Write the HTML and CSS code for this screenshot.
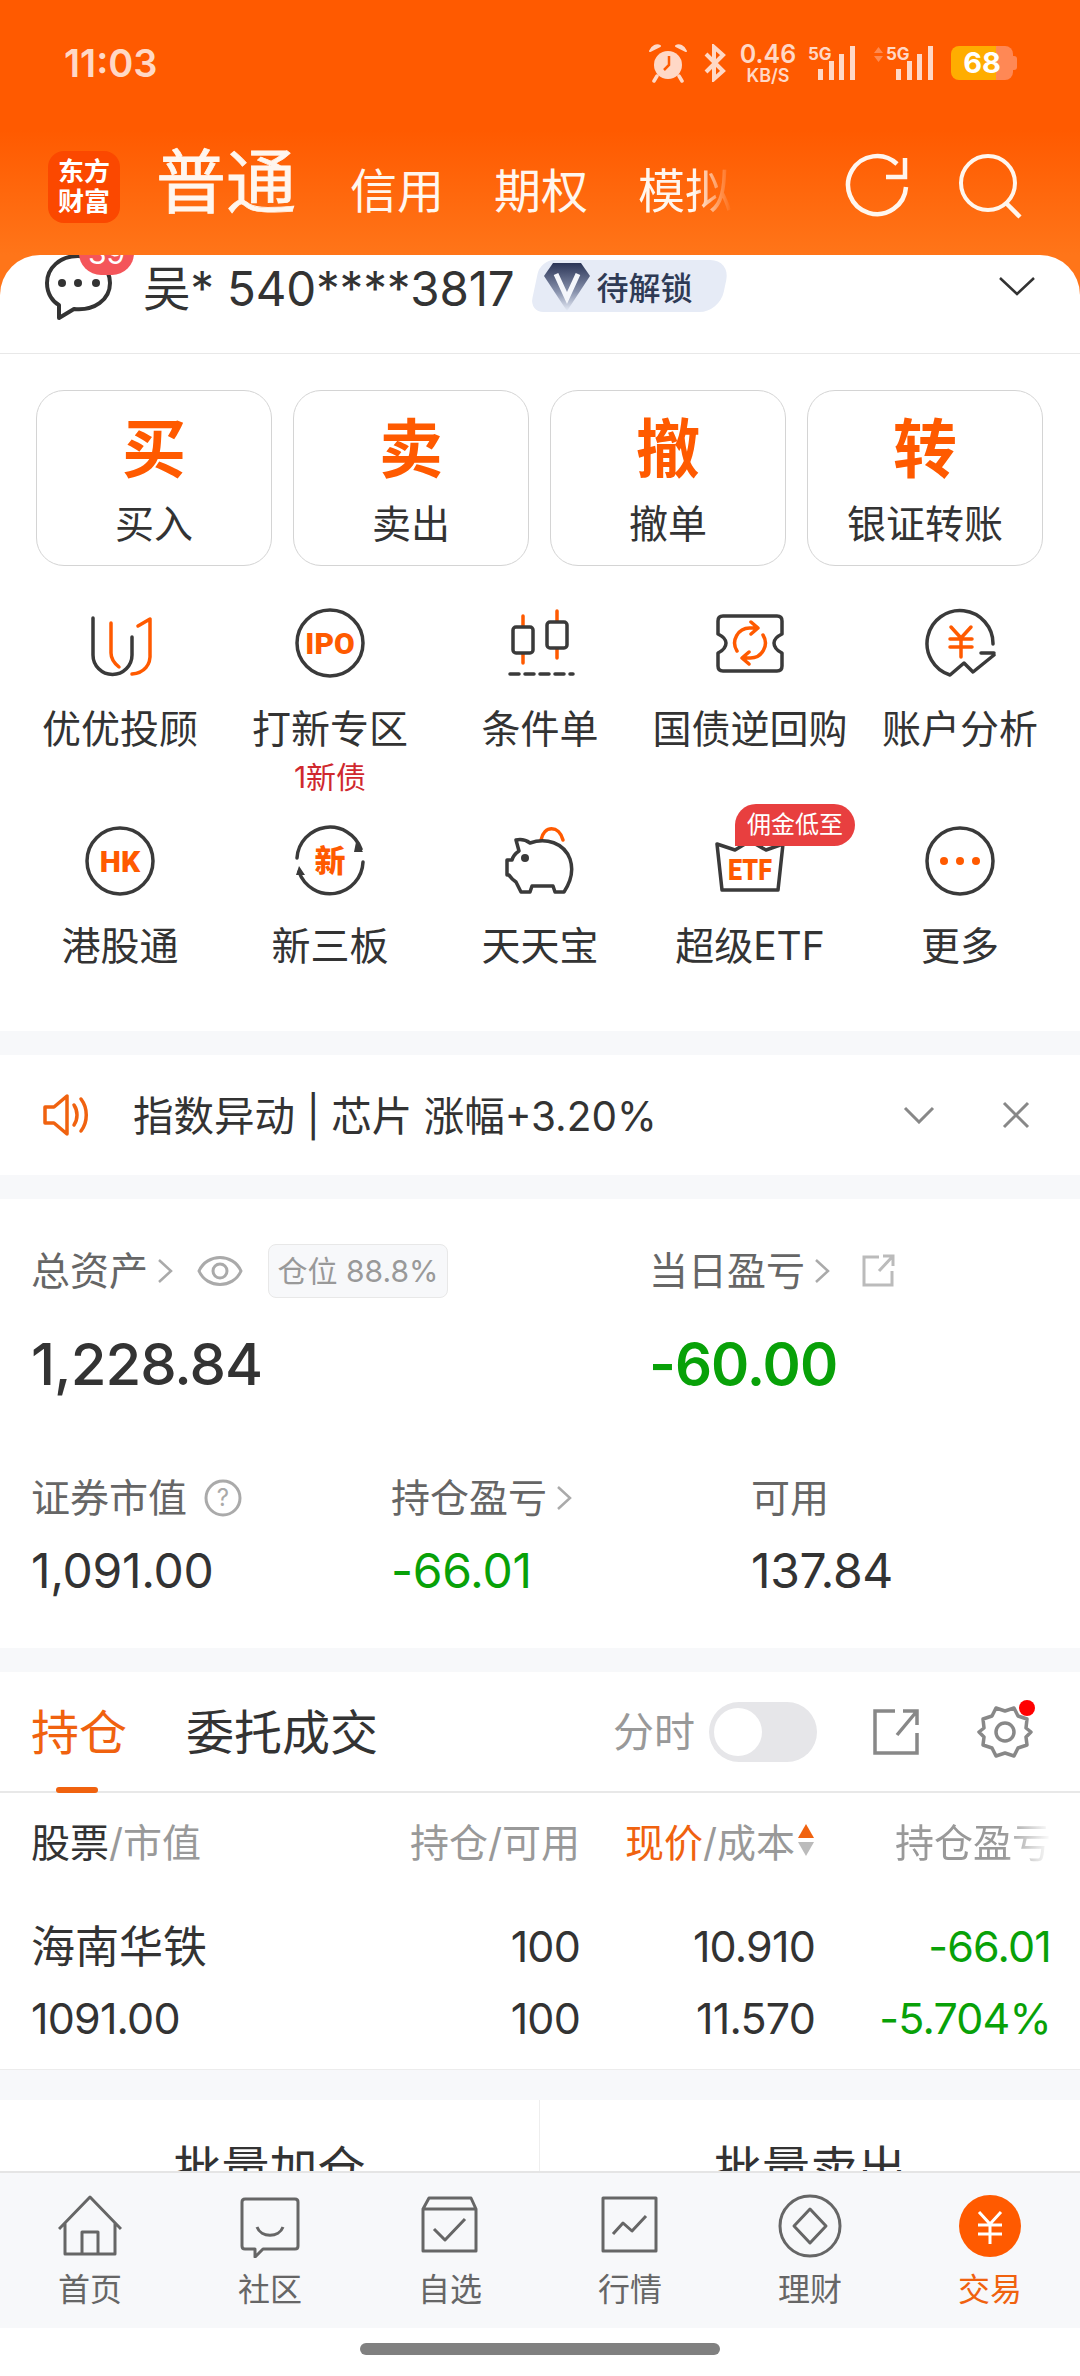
FILE: index.html
```html
<!DOCTYPE html>
<html lang="zh-CN">
<head>
    <meta charset="UTF-8">
    <meta name="viewport" content="width=device-width, initial-scale=1.0">
    <title>交易</title>
    <link rel="stylesheet" href="styles.css">
</head>
<body>
<div class="phone">

    <div class="header">
        <div class="status">
            <span class="time">11:03</span>
            <div class="status-icons">
                <svg class="st-alarm" width="38" height="40" viewBox="0 0 38 40"><circle cx="19" cy="22" r="14" fill="#ffd8c6"/><path d="M1 8 C3 3 8 1 11 3 Z M37 8 C35 3 30 1 27 3 Z" fill="#ffd8c6" stroke="#ffd8c6" stroke-width="2" stroke-linejoin="round"/><path d="M8 33 L5 38 M30 33 L33 38" stroke="#ffd8c6" stroke-width="3.5" stroke-linecap="round"/><path d="M20 13 V22 L15 27" fill="none" stroke="#ff5a00" stroke-width="2.5"/></svg>
                <svg class="st-bt" width="24" height="38" viewBox="0 0 24 38"><path d="M3 10 L20 27 L11 35 V3 L20 11 L3 28" fill="none" stroke="#ffd8c6" stroke-width="4"/></svg>
                <div class="st-net"><span class="net-num">0.46</span><span class="net-unit">KB/S</span></div>
                <svg class="st-sig" width="48" height="38" viewBox="0 0 48 38"><text x="0" y="16" class="sig-text">5G</text><path d="M10 25 h5 v11 h-5z M21 17 h5 v19 h-5z M31 10 h5 v26 h-5z M42 2 h5 v34 h-5z" fill="#ffd8c6"/></svg>
                <svg class="st-sig2" width="60" height="38" viewBox="0 0 60 38"><path d="M0 9 L4.5 3 L9 9z M0 12 L4.5 18 L9 12z" fill="#ff8a50"/><text x="12" y="16" class="sig-text">5G</text><path d="M22 25 h5 v11 h-5z M33 17 h5 v19 h-5z M43 10 h5 v26 h-5z M54 2 h5 v34 h-5z" fill="#ffd8c6"/></svg>
                <div class="battery">68</div>
            </div>
        </div>
        <div class="nav">
            <div class="logo"><span>东方</span><span>财富</span></div>
            <div class="nav-tabs">
                <span class="nav-main">普通</span>
                <span>信用</span>
                <span>期权</span>
                <span class="nav-fade">模拟</span>
            </div>
            <svg class="nav-refresh" width="70" height="70" viewBox="0 0 70 70"><path d="M55 12 A29 29 0 1 0 64 35 M63 6 V25 H44" fill="none" stroke="#fff6ee" stroke-width="4.5"/></svg>
            <svg class="nav-search" width="70" height="70" viewBox="0 0 70 70"><circle cx="32" cy="31" r="27" fill="none" stroke="#fff6ee" stroke-width="4"/><path d="M50 51 L64 65" stroke="#fff6ee" stroke-width="4.5"/></svg>
        </div>
    </div>

    <div class="main">
        <div class="account">
            <div class="chat">
                <svg width="70" height="72" viewBox="0 0 70 72"><path d="M34 3 C16 3 3 15 3 30 C3 41 9 49 15 52 V65 L30 56 C50 58 66 47 66 30 C66 15 52 3 34 3 Z" fill="none" stroke="#333" stroke-width="4" stroke-linejoin="round"/><circle cx="18" cy="30" r="4" fill="#333"/><circle cx="34" cy="30" r="4" fill="#333"/><circle cx="52" cy="30" r="4" fill="#333"/></svg>
                <span class="chat-badge">39</span>
            </div>
            <span class="acc-name">吴* 540****3817</span>
            <div class="unlock">
                <svg width="48" height="52" viewBox="0 0 48 52"><defs><linearGradient id="dia" x1="0" y1="0" x2="0" y2="1"><stop offset="0" stop-color="#2b3557"/><stop offset="0.6" stop-color="#8892ad"/><stop offset="1" stop-color="#e6ebf6"/></linearGradient></defs><path d="M10 3 H38 L47 16 L24 51 L1 16 Z" fill="url(#dia)"/><path d="M13 14 L24 38 L35 14" fill="none" stroke="#f4f6fb" stroke-width="5"/></svg>
                <span>待解锁</span>
            </div>
            <svg class="acc-arrow" width="38" height="20" viewBox="0 0 38 20"><path d="M2 2 L19 18 L36 2" fill="none" stroke="#333" stroke-width="2.5"/></svg>
        </div>

        <div class="quick">
            <div class="trade-btns">
                <div class="trade-btn"><b>买</b><span>买入</span></div>
                <div class="trade-btn"><b>卖</b><span>卖出</span></div>
                <div class="trade-btn"><b>撤</b><span>撤单</span></div>
                <div class="trade-btn"><b>转</b><span>银证转账</span></div>
            </div>
            <div class="menu">
                <div class="menu-item">
                    <svg class="ic" viewBox="0 0 72 72"><path d="M9 10 V47 A19.5 19.5 0 0 0 48 47 V29" class="dk"/><path d="M27 15 V45 C27 51 30 55 35 59 M54 18 L66 11 V45 C67 57 60 65 48 66" class="or"/></svg>
                    <span class="menu-label">优优投顾</span>
                </div>
                <div class="menu-item">
                    <svg class="ic" viewBox="0 0 72 72"><circle cx="36" cy="35" r="33" class="dk"/><text x="36" y="46" class="ic-text ic-ipo">IPO</text></svg>
                    <span class="menu-label">打新专区</span>
                    <span class="menu-sub">1新债</span>
                </div>
                <div class="menu-item">
                    <svg class="ic" viewBox="0 0 72 72"><path d="M19 8 V55 M53 3 V50" class="or"/><rect x="9" y="19" width="20" height="26" rx="3" fill="#fff" stroke="#3a3a3a" stroke-width="3.5"/><rect x="43" y="14" width="20" height="26" rx="3" fill="#fff" stroke="#3a3a3a" stroke-width="3.5"/><path d="M6 66 H69" class="dk" stroke-dasharray="9 6"/></svg>
                    <span class="menu-label">条件单</span>
                </div>
                <div class="menu-item">
                    <svg class="ic" viewBox="0 0 72 72"><path d="M9 8 H63 Q68 8 68 13 V26 Q60 30 60 35 Q60 41 68 45 V58 Q68 63 63 63 H9 Q4 63 4 58 V45 Q12 41 12 35 Q12 30 4 26 V13 Q4 8 9 8 Z" class="dk"/><path d="M23 43 A15 15 0 0 1 36 20 H42 M37 14 L44 20 L37 26 M49 27 A15 15 0 0 1 36 50 H30 M35 44 L28 50 L35 56" class="or" stroke-width="4"/></svg>
                    <span class="menu-label">国债逆回购</span>
                </div>
                <div class="menu-item">
                    <svg class="ic" viewBox="0 0 72 72"><path d="M69 36 A33 33 0 1 0 26 67 L40 55 L49 64 L70 47 M57 45 H70" class="dk"/><path d="M27 19 L37 30 L47 19 M26 31 H48 M26 39 H48 M37 30 V49" class="or" stroke-width="4.5"/></svg>
                    <span class="menu-label">账户分析</span>
                </div>
                <div class="menu-item">
                    <svg class="ic" viewBox="0 0 72 72"><circle cx="36" cy="36" r="33" class="dk"/><text x="36" y="47" class="ic-text ic-hk">HK</text></svg>
                    <span class="menu-label">港股通</span>
                </div>
                <div class="menu-item">
                    <svg class="ic" viewBox="0 0 72 72"><path d="M3 33 A33 33 0 0 1 67 24 M69 37 A33 33 0 0 1 5 47" class="dk"/><path d="M62 17 L69 27 L60 27 Z M5 41 L11 50 L2 50 Z" fill="#3a3a3a"/><text x="36" y="47" class="ic-text ic-new">新</text></svg>
                    <span class="menu-label">新三板</span>
                </div>
                <div class="menu-item">
                    <svg class="ic" viewBox="0 0 72 72"><path d="M37 15 C40 0 55 0 59 15" class="or"/><path d="M12 15 C17 14 22 15 26 18 C42 12 60 18 66 34 C70 46 66 58 60 67 H51 L49 61 H28 L26 67 H17 L12 57 C9 55 7 53 5 50 H3 V35 H8 C9 31 12 28 15 26 Z" class="dk"/><circle cx="21" cy="33" r="4" fill="#3a3a3a"/></svg>
                    <span class="menu-label">天天宝</span>
                </div>
                <div class="menu-item">
                    <svg class="ic" viewBox="0 0 72 72"><path d="M3 19 L21 25 L36 16 L52 25 L69 19 L64 65 H8 Z" class="dk"/><text x="14" y="55" textLength="44" lengthAdjust="spacingAndGlyphs" class="ic-text ic-etf">ETF</text></svg>
                    <span class="menu-tag">佣金低至</span>
                    <span class="menu-label">超级ETF</span>
                </div>
                <div class="menu-item">
                    <svg class="ic" viewBox="0 0 72 72"><circle cx="36" cy="36" r="33" class="dk"/><circle cx="20" cy="36" r="4" fill="#ff5a00"/><circle cx="36" cy="36" r="4" fill="#ff5a00"/><circle cx="52" cy="36" r="4" fill="#ff5a00"/></svg>
                    <span class="menu-label">更多</span>
                </div>
            </div>
        </div>

        <div class="notice">
            <svg class="notice-icon" width="46" height="42" viewBox="0 0 46 42"><path d="M2 13 H11 L24 2 V40 L11 29 H2 Z" fill="none" stroke="#f0620f" stroke-width="3.5" stroke-linejoin="round"/><path d="M31 11 C35 17 35 25 31 31 M38 5 C45 14 45 28 38 37" fill="none" stroke="#f0620f" stroke-width="3.5" stroke-linecap="round"/></svg>
            <span class="notice-text">指数异动 | 芯片 涨幅+3.20%</span>
            <svg class="notice-down" width="32" height="18" viewBox="0 0 32 18"><path d="M2 2 L16 16 L30 2" fill="none" stroke="#888" stroke-width="3"/></svg>
            <svg class="notice-close" width="28" height="28" viewBox="0 0 28 28"><path d="M2 2 L26 26 M26 2 L2 26" fill="none" stroke="#888" stroke-width="3"/></svg>
        </div>

        <div class="assets">
            <div class="assets-top">
                <div class="assets-col">
                    <div class="asset-title">
                        <span class="title-text">总资产</span>
                        <svg class="chev" width="16" height="26" viewBox="0 0 16 26"><path d="M2 2 L14 13 L2 24" fill="none" stroke="#aaa" stroke-width="2.5"/></svg>
                        <svg class="eye" width="46" height="34" viewBox="0 0 46 34"><path d="M2 17 C10 -1 36 -1 44 17 C36 35 10 35 2 17 Z" fill="none" stroke="#aaa" stroke-width="3"/><circle cx="23" cy="17" r="7" fill="none" stroke="#aaa" stroke-width="3"/></svg>
                        <span class="pos-tag">仓位 88.8%</span>
                    </div>
                    <div class="asset-big">1,228.84</div>
                </div>
                <div class="assets-col">
                    <div class="asset-title">
                        <span class="title-text">当日盈亏</span>
                        <svg class="chev" width="16" height="26" viewBox="0 0 16 26"><path d="M2 2 L14 13 L2 24" fill="none" stroke="#aaa" stroke-width="2.5"/></svg>
                        <svg class="ext" width="34" height="34" viewBox="0 0 34 34"><path d="M18 3 H3 V31 H31 V17 M32 2 L18 17 M22 2 H32 V12" fill="none" stroke="#bbb" stroke-width="3"/></svg>
                    </div>
                    <div class="asset-big asset-green">-60.00</div>
                </div>
            </div>
            <div class="assets-grid">
                <div class="asset-title">
                    <span class="title-text">证券市值</span>
                    <svg class="help" width="38" height="38" viewBox="0 0 38 38"><circle cx="19" cy="19" r="17" fill="none" stroke="#aaa" stroke-width="3"/><text x="19" y="27" class="help-text">?</text></svg>
                </div>
                <div class="asset-title">
                    <span class="title-text">持仓盈亏</span>
                    <svg class="chev" width="16" height="26" viewBox="0 0 16 26"><path d="M2 2 L14 13 L2 24" fill="none" stroke="#aaa" stroke-width="2.5"/></svg>
                </div>
                <div class="asset-title"><span class="title-text">可用</span></div>
                <div class="asset-num">1,091.00</div>
                <div class="asset-num num-green">-66.01</div>
                <div class="asset-num">137.84</div>
            </div>
        </div>

        <div class="holdings">
            <div class="hold-tabs">
                <span class="hold-tab hold-active">持仓</span>
                <span class="hold-tab">委托成交</span>
                <span class="split-label">分时</span>
                <span class="switch"></span>
                <svg class="hold-share" width="46" height="46" viewBox="0 0 46 46"><path d="M22 2 H2 V44 H44 V24 M44 2 L24 26 M30 2 H44 V16" fill="none" stroke="#888" stroke-width="3.5"/></svg>
                <div class="hold-gear">
                    <svg width="56" height="54" viewBox="0 0 56 54"><path d="M19 3 L28 6 L37 3 L41 11 L50 14 L49 23 L54 27 L49 32 L50 40 L41 43 L37 51 L28 48 L19 51 L15 43 L6 40 L7 32 L2 27 L7 23 L6 14 L15 11 Z" fill="none" stroke="#888" stroke-width="3.5" stroke-linejoin="round"/><circle cx="28" cy="27" r="9" fill="none" stroke="#888" stroke-width="3.5"/></svg>
                    <span class="gear-dot"></span>
                </div>
            </div>
            <div class="hold-table">
                <div class="th"><span class="th-dark">股票</span>/市值</div>
                <div class="th th-r">持仓/可用</div>
                <div class="th th-r"><span class="th-orange">现价</span>/成本<svg class="sort" width="18" height="36" viewBox="0 0 18 36"><path d="M9 2 L17 16 H1 Z" fill="#f0620f"/><path d="M9 34 L17 20 H1 Z" fill="#bbb"/></svg></div>
                <div class="th th-r th-fade">持仓盈亏</div>

                <div class="td td-name">海南华铁</div>
                <div class="td td-r">100</div>
                <div class="td td-r">10.910</div>
                <div class="td td-r td-green">-66.01</div>
                <div class="td">1091.00</div>
                <div class="td td-r">100</div>
                <div class="td td-r">11.570</div>
                <div class="td td-r td-green">-5.704%</div>
            </div>
        </div>

        <div class="batch">
            <div class="batch-item">批量加仓</div>
            <div class="batch-item">批量卖出</div>
        </div>
    </div>

    <div class="tabbar">
        <div class="tab">
            <svg viewBox="0 0 64 64"><path d="M1 35 L32 3 L63 35 M7 29 V60 H57 V29 M24 60 V38 H40 V60" class="tab-line"/></svg>
            <span>首页</span>
        </div>
        <div class="tab">
            <svg viewBox="0 0 64 64"><path d="M7 5 H57 Q60 5 60 8 V52 Q60 55 57 55 H25 L17 63 V55 H7 Q4 55 4 52 V8 Q4 5 7 5 Z M19 33 C23 44 41 44 45 33" class="tab-line"/></svg>
            <span>社区</span>
        </div>
        <div class="tab">
            <svg viewBox="0 0 64 64"><path d="M11 4 H53 L58 15 V57 H5 V15 Z M5 15 H58 M16 35 L27 46 L47 25" class="tab-line"/></svg>
            <span>自选</span>
        </div>
        <div class="tab">
            <svg viewBox="0 0 64 64"><path d="M5 4 H58 V57 H5 Z M15 40 L25 29 L34 37 L48 22" class="tab-line"/></svg>
            <span>行情</span>
        </div>
        <div class="tab">
            <svg viewBox="0 0 64 64"><circle cx="32" cy="32" r="30" class="tab-line"/><path d="M32 15 L48 32 L32 49 L16 32 Z" class="tab-line"/></svg>
            <span>理财</span>
        </div>
        <div class="tab tab-active">
            <svg viewBox="0 0 64 64"><circle cx="32" cy="32" r="31" fill="#ff5a00"/><path d="M21 18 L32 30 L43 18 M20 31 H44 M20 40 H44 M32 30 V50" fill="none" stroke="#fff" stroke-width="3"/></svg>
            <span>交易</span>
        </div>
    </div>

    <div class="home-area"><span class="home-bar"></span></div>
</div>
</body>
</html>
```

FILE: styles.css
```css
* {
    box-sizing: border-box;
}

body {
    margin: 0;
    background: #fff;
    font-family: "Inter", "Noto Sans CJK SC", sans-serif;
    color: #333;
}

.phone {
    width: 1080px;
    height: 2376px;
    display: flex;
    flex-direction: column;
    overflow: hidden;
    background: #fff;
}

/* header */
.header {
    height: 295px;
    flex-shrink: 0;
    padding-top: 40px;
    background: linear-gradient(#ff5a00 0, #ff5a00 130px, #ff7519 255px);
}

.status {
    height: 46px;
    display: flex;
    align-items: center;
    padding: 0 63px 0 64px;
}

.time {
    font-size: 38px;
    font-weight: 600;
    color: #ffd8c6;
}

.status-icons {
    margin-left: auto;
    display: flex;
    align-items: center;
}

.st-bt {
    margin-left: 16px;
}

.st-net {
    margin-left: 12px;
    width: 58px;
    display: flex;
    flex-direction: column;
    align-items: center;
    color: #ffd8c6;
    font-weight: 600;
}

.net-num {
    font-size: 25px;
    line-height: 25px;
}

.net-unit {
    font-size: 18px;
    line-height: 18px;
}

.st-sig {
    margin-left: 11px;
}

.st-sig2 {
    margin-left: 18px;
}

.sig-text {
    font-size: 17px;
    font-weight: 700;
    fill: #ffd8c6;
}

.battery {
    position: relative;
    margin-left: 17px;
    margin-right: 4px;
    width: 62px;
    height: 34px;
    border-radius: 8px;
    background: linear-gradient(90deg, #ffad00 72%, #ff8855 72%);
    color: #fff;
    font-size: 29px;
    font-weight: 700;
    line-height: 34px;
    text-align: center;
}

.battery::after {
    content: "";
    position: absolute;
    right: -4px;
    top: 10px;
    width: 4px;
    height: 14px;
    border-radius: 0 3px 3px 0;
    background: #ff8855;
}

.nav {
    margin-top: 65px;
    height: 72px;
    display: flex;
    align-items: center;
    padding-left: 48px;
}

.logo {
    width: 72px;
    height: 72px;
    border-radius: 16px;
    background: #fb4800;
    display: flex;
    flex-direction: column;
    align-items: center;
    justify-content: center;
    color: #fff;
    font-size: 26px;
    font-weight: 700;
    line-height: 30px;
}

.nav-tabs {
    margin-left: 36px;
    display: flex;
    align-items: baseline;
    gap: 50px;
    color: #fff6ee;
    font-size: 47px;
    line-height: 72px;
}

.nav-main {
    font-size: 70px;
    margin-right: 4px;
    -webkit-text-stroke: 0.8px #fff6ee;
}

.nav-fade {
    -webkit-mask-image: linear-gradient(90deg, #000 60%, transparent 100%);
    mask-image: linear-gradient(90deg, #000 60%, transparent 100%);
}

.nav-refresh {
    margin-left: auto;
}

.nav-search {
    margin-left: 44px;
    margin-right: 54px;
}

/* account */
.main {
    flex: 1;
    min-height: 0;
    margin-top: -40px;
    overflow: hidden;
    border-radius: 40px 40px 0 0;
    background: #fff;
}

.account {
    height: 99px;
    display: flex;
    align-items: center;
    padding: 0 0 37px 44px;
    border-bottom: 1px solid #e8e8e8;
}

.chat {
    position: relative;
    width: 70px;
    height: 72px;
    margin-top: 6px;
    flex-shrink: 0;
}

.chat svg {
    display: block;
}

.chat-badge {
    position: absolute;
    left: 35px;
    top: -22px;
    width: 55px;
    height: 44px;
    border-radius: 22px;
    background: #f4555a;
    color: #fff;
    font-size: 30px;
    line-height: 44px;
    text-align: center;
}

.acc-name {
    margin-left: 29px;
    font-size: 47.5px;
    letter-spacing: -0.2px;
    white-space: nowrap;
}

.unlock {
    position: relative;
    margin-left: 20px;
    width: 190px;
    height: 52px;
    display: flex;
    align-items: center;
    padding-left: 8px;
    color: #2e3a55;
    font-size: 32px;
    font-weight: 500;
}

.unlock::before {
    content: "";
    position: absolute;
    inset: 0;
    border-radius: 14px 20px 20px 14px;
    background: #e6ebf6;
    transform: skewX(-12deg);
}

.unlock svg,
.unlock span {
    position: relative;
}

.unlock span {
    margin-left: 6px;
}

.acc-arrow {
    margin-left: auto;
    margin-right: 44px;
}

/* quick menu */
.quick {
    padding: 36px 0 57px;
}

.trade-btns {
    display: flex;
    gap: 21px;
    padding: 0 36px;
}

.trade-btn {
    width: 236px;
    height: 176px;
    border: 1.5px solid #d4d4d4;
    border-radius: 28px;
    display: flex;
    flex-direction: column;
    align-items: center;
}

.trade-btn b {
    margin-top: 20px;
    font-size: 64px;
    line-height: 76px;
    font-weight: 700;
    color: #ff5a00;
}

.trade-btn span {
    margin-top: 12px;
    font-size: 39px;
    line-height: 50px;
}

.menu {
    margin-top: 42px;
    display: grid;
    grid-template-columns: repeat(5, 1fr);
    grid-template-rows: 217px 149px;
    padding: 0 15px;
}

.menu-item {
    position: relative;
    display: flex;
    flex-direction: column;
    align-items: center;
}

.ic {
    width: 72px;
    height: 72px;
    flex-shrink: 0;
}

.dk {
    fill: none;
    stroke: #3a3a3a;
    stroke-width: 3.5;
    stroke-linejoin: round;
    stroke-linecap: round;
}

.or {
    fill: none;
    stroke: #ff5a00;
    stroke-width: 3.5;
    stroke-linecap: round;
    stroke-linejoin: round;
}

.ic-text {
    fill: #ff5a00;
    font-family: "Roboto", "Noto Sans CJK SC", sans-serif;
    font-weight: 900;
    text-anchor: middle;
}

.ic-ipo {
    font-size: 30px;
}

.ic-hk {
    font-size: 30px;
}

.ic-new {
    font-size: 31px;
}

.ic-etf {
    font-size: 30px;
    text-anchor: start;
}

.menu-label {
    margin-top: 21px;
    font-size: 39px;
    line-height: 56px;
    white-space: nowrap;
}

.menu-sub {
    font-size: 30px;
    line-height: 40px;
    color: #d0282e;
}

.menu-tag {
    position: absolute;
    left: 90px;
    top: -21px;
    width: 120px;
    height: 42px;
    border-radius: 21px 21px 21px 0;
    background: #e83f3f;
    color: #fff;
    font-size: 24px;
    line-height: 42px;
    text-align: center;
}

/* notice */
.notice {
    height: 168px;
    display: flex;
    align-items: center;
    padding: 0 50px 0 43px;
    border-top: 24px solid #f7f8fa;
    border-bottom: 24px solid #f7f8fa;
}

.notice-text {
    margin-left: 44px;
    padding-bottom: 4px;
    font-size: 40.5px;
}

.notice-down {
    margin-left: auto;
}

.notice-close {
    margin-left: 67px;
}

/* assets */
.assets {
    padding: 45px 0 47px 31px;
}

.assets-top {
    display: flex;
}

.assets-col {
    flex: 0 0 618px;
}

.asset-title {
    height: 54px;
    display: flex;
    align-items: center;
    font-size: 39px;
    color: #666;
}

.title-text {
    padding-bottom: 6px;
}

.chev {
    margin-left: 9px;
}

.eye {
    margin-left: 24px;
}

.ext {
    margin-left: 31px;
}

.pos-tag {
    margin-left: 25px;
    width: 180px;
    height: 54px;
    border: 1px solid #e8e8e8;
    border-radius: 8px;
    background: #f7f8fa;
    color: #999;
    font-size: 30px;
    line-height: 52px;
    text-align: center;
}

.asset-big {
    margin-top: 26px;
    font-size: 58px;
    line-height: 80px;
    font-weight: 500;
    letter-spacing: -1px;
}

.asset-green {
    color: #08a108;
    font-weight: 600;
}

.assets-grid {
    margin-top: 67px;
    display: grid;
    grid-template-columns: 360px 360px 1fr;
}

.help {
    margin-left: 17px;
}

.help-text {
    font-size: 24px;
    fill: #aaa;
    text-anchor: middle;
}

.asset-num {
    margin-top: 16px;
    font-size: 48px;
    line-height: 60px;
    letter-spacing: -0.3px;
}

.num-green {
    color: #08a108;
}

/* holdings */
.holdings {
    border-top: 24px solid #f7f8fa;
    border-bottom: 1px solid #ececec;
}

.hold-tabs {
    position: relative;
    height: 121px;
    display: flex;
    align-items: center;
    padding: 0 0 0 31px;
    border-bottom: 2px solid #e8e8e8;
}

.hold-tab {
    font-size: 48px;
    margin-right: 59px;
    padding-bottom: 5px;
}

.hold-active {
    position: relative;
    align-self: stretch;
    display: flex;
    align-items: center;
    color: #f0620f;
}

.hold-active::after {
    content: "";
    position: absolute;
    left: 25px;
    bottom: -2px;
    width: 42px;
    height: 6px;
    border-radius: 3px;
    background: #f0620f;
}

.split-label {
    margin-left: auto;
    padding-bottom: 5px;
    font-size: 41px;
    color: #999;
}

.switch {
    position: relative;
    margin-left: 14px;
    width: 108px;
    height: 60px;
    border-radius: 30px;
    background: #e6e6e9;
}

.switch::after {
    content: "";
    position: absolute;
    left: 5px;
    top: 6px;
    width: 48px;
    height: 48px;
    border-radius: 50%;
    background: #fff;
}

.hold-share {
    margin-left: 56px;
}

.hold-gear {
    position: relative;
    width: 56px;
    height: 54px;
    margin-left: 58px;
    margin-right: 47px;
}

.gear-dot {
    position: absolute;
    right: -2px;
    top: -5px;
    width: 16px;
    height: 16px;
    border-radius: 50%;
    background: #f00;
}

.hold-table {
    display: grid;
    grid-template-columns: 269px 280px 235px 236px;
    padding: 21px 0 15px 31px;
}

.th {
    height: 56px;
    margin-bottom: 40px;
    padding-bottom: 5px;
    display: flex;
    align-items: center;
    font-size: 39px;
    color: #999;
    white-space: nowrap;
}

.th-r {
    justify-content: flex-end;
}

.th-dark {
    color: #333;
}

.th-orange {
    color: #f0620f;
}

.sort {
    margin-left: 2px;
}

.th-fade {
    -webkit-mask-image: linear-gradient(90deg, #000 80%, transparent 100%);
    mask-image: linear-gradient(90deg, #000 80%, transparent 100%);
}

.td {
    height: 72px;
    display: flex;
    align-items: center;
    font-size: 43px;
    letter-spacing: -0.8px;
}

.td-name {
    font-size: 44px;
    letter-spacing: 0;
    padding-bottom: 4px;
}

.td-r {
    justify-content: flex-end;
}

.td-green {
    color: #08a108;
}

/* batch buttons */
.batch {
    display: flex;
    height: 200px;
    border-top: 30px solid #f7f8fa;
}

.batch-item {
    width: 50%;
    padding-top: 39px;
    font-size: 48px;
    line-height: 60px;
    text-align: center;
}

.batch-item:first-child {
    border-right: 1px solid #eee;
}

/* tabbar */
.tabbar {
    height: 157px;
    flex-shrink: 0;
    display: flex;
    padding-top: 21px;
    background: #f7f8fa;
    border-top: 2px solid #e5e5e5;
}

.tab {
    width: 180px;
    display: flex;
    flex-direction: column;
    align-items: center;
    font-size: 32px;
    color: #666;
}

.tab svg {
    width: 64px;
    height: 64px;
}

.tab span {
    margin-top: 14px;
    line-height: 36px;
}

.tab-line {
    fill: none;
    stroke: #666;
    stroke-width: 3;
    stroke-linejoin: round;
}

.tab-active {
    color: #f0620f;
}

.home-area {
    height: 48px;
    flex-shrink: 0;
    padding-top: 15px;
    display: flex;
    justify-content: center;
    align-items: flex-start;
}

.home-bar {
    width: 360px;
    height: 12px;
    border-radius: 6px;
    background: #808080;
}
```
